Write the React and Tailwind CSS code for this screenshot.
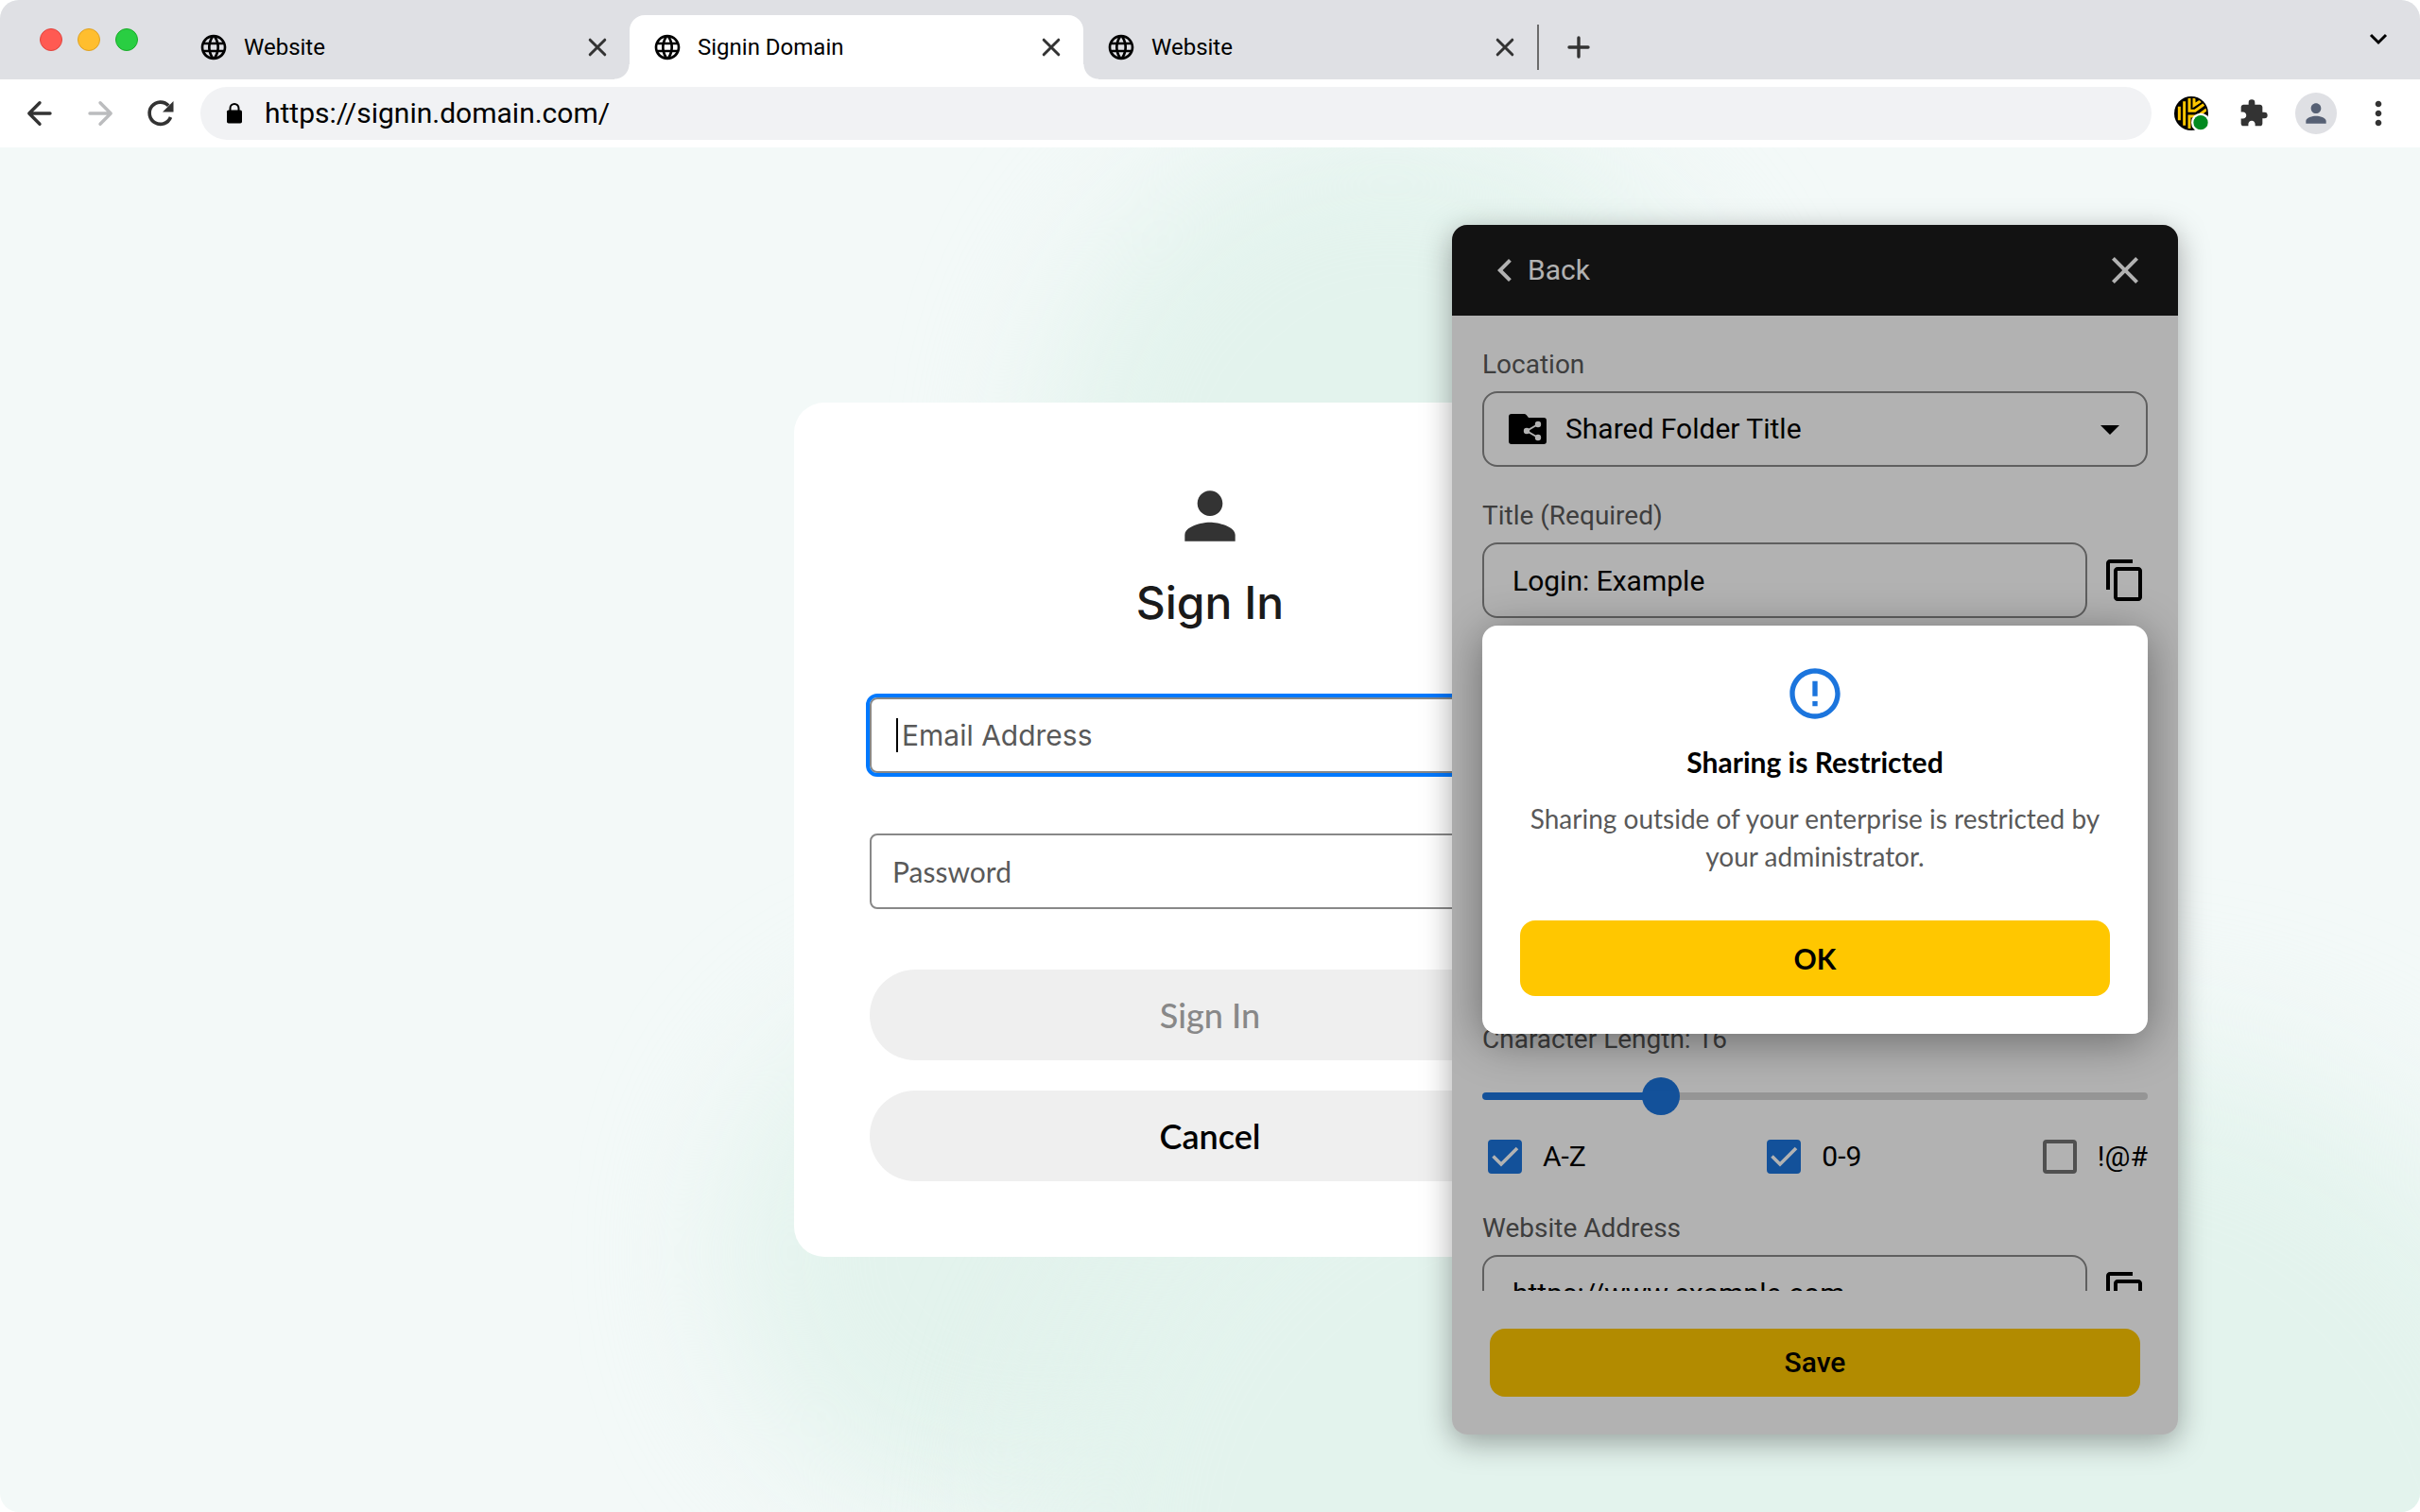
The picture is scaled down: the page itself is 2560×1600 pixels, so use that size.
import React from "react";
import {
  MdArrowDropDown,
  MdChevronLeft,
  MdClose,
  MdContentCopy,
  MdErrorOutline,
  MdExtension,
  MdLanguage,
  MdMoreVert,
  MdPerson,
} from "react-icons/md";

const CloseGlyph = () => (
  <svg viewBox="0 0 32 32" className="size-8" fill="none" stroke="#333333" strokeWidth="3" strokeLinecap="round">
    <path d="M8.2 8.2 23.8 23.8M23.8 8.2 8.2 23.8" />
  </svg>
);

const KeeperLogo = () => (
  <svg viewBox="0 0 108 108" className="size-9">
    <defs>
      <clipPath id="keeper-disc">
        <circle cx="54" cy="54" r="49" />
      </clipPath>
    </defs>
    <circle cx="54" cy="54" r="54" fill="#000000" />
    <g clipPath="url(#keeper-disc)" fill="none" stroke="#ffc700" strokeWidth="9">
      <path d="M16 32V76" />
      <path d="M32 16V92" />
      <path d="M48 6V46H66L96 24" />
      <path d="M63 6V28L84 14" />
      <path d="M48 102V63H74L104 40" />
      <path d="M63 100V78H82L104 62" />
    </g>
    <circle cx="84" cy="83" r="30" fill="#ffffff" />
    <circle cx="84" cy="83" r="23" fill="#008a20" />
  </svg>
);

const SharedFolder = () => (
  <svg viewBox="0 0 48 48" className="size-12 shrink-0">
    <path
      d="M7 8h13.2c1 0 1.8.4 2.4 1.1L25 12h16a3 3 0 0 1 3 3v22a3 3 0 0 1-3 3H7a3 3 0 0 1-3-3V11a3 3 0 0 1 3-3Z"
      fill="#000000"
    />
    <g stroke="#ffffff" strokeWidth="2" fill="#ffffff">
      <path d="M35 19 23 26 35 33" fill="none" />
      <circle cx="35" cy="19" r="2.2" />
      <circle cx="23" cy="26" r="2.2" />
      <circle cx="35" cy="33" r="2.2" />
    </g>
  </svg>
);

function Tab({ title, active = false }) {
  return (
    <div
      className={
        active
          ? "relative flex w-[480px] items-center gap-4 rounded-t-2xl bg-white pr-[18px] pl-6"
          : "flex w-[480px] items-center gap-4 pr-[18px] pl-6"
      }
    >
      {active && (
        <>
          <span className="absolute bottom-0 -left-4 size-4 bg-[radial-gradient(circle_at_top_left,transparent_15px,#ffffff_16px)]" />
          <span className="absolute -right-4 bottom-0 size-4 bg-[radial-gradient(circle_at_top_right,transparent_15px,#ffffff_16px)]" />
        </>
      )}
      <button type="button" className="flex flex-1 items-center gap-4 text-left text-2xl text-black">
        <MdLanguage className="size-8" />
        <span>{title}</span>
      </button>
      <button type="button" aria-label={`Close ${title}`}>
        <CloseGlyph />
      </button>
    </div>
  );
}

function TabBar() {
  return (
    <div className="flex h-21 bg-[#dfe0e4]">
      <div className="flex h-full w-[186px] items-center gap-4 pl-[42px]">
        <button type="button" aria-label="Close window" className="size-6 rounded-full border border-[#e0443e] bg-[#ff5a52]" />
        <button type="button" aria-label="Minimize window" className="size-6 rounded-full border border-[#dea123] bg-[#ffbe2e]" />
        <button type="button" aria-label="Zoom window" className="size-6 rounded-full border border-[#1aab29] bg-[#29ce42]" />
      </div>
      <div className="flex pt-4">
        <Tab title="Website" />
        <Tab title="Signin Domain" active />
        <Tab title="Website" />
      </div>
      <div className="flex flex-1 items-center gap-[26px] pt-4">
        <span className="h-12 w-0.5 bg-[#6b6b6b]" />
        <button type="button" aria-label="New tab">
          <svg viewBox="0 0 32 32" className="size-8" fill="none" stroke="#333333" strokeWidth="3.4" strokeLinecap="round">
            <path d="M16 6v20M6 16h20" />
          </svg>
        </button>
      </div>
      <button type="button" aria-label="Search tabs" className="mr-7 self-center">
        <svg viewBox="0 0 32 32" className="size-8" fill="none" stroke="#000000" strokeWidth="3">
          <path d="m8 11 8 8 8-8" />
        </svg>
      </button>
    </div>
  );
}

const barButton = "flex size-11 items-center justify-center";

function Toolbar() {
  return (
    <div className="flex h-18 items-center gap-5 bg-white pl-5">
      <button type="button" aria-label="Back" className={barButton}>
        <svg viewBox="0 0 44 44" className="size-11" fill="none" stroke="#333333" strokeWidth="3.4" strokeLinecap="round" strokeLinejoin="round">
          <path d="M33 22H11M22 10.800 10.800 22 22 33.200" />
        </svg>
      </button>
      <button type="button" aria-label="Forward" className={barButton}>
        <svg viewBox="0 0 44 44" className="size-11" fill="none" stroke="#bbbcbe" strokeWidth="3.4" strokeLinecap="round" strokeLinejoin="round">
          <path d="M11 22h22M22 10.800 33.200 22 22 33.200" />
        </svg>
      </button>
      <button type="button" aria-label="Reload" className={barButton}>
        <svg viewBox="0 0 44 44" className="size-11">
          <path d="M32.500 26A11.600 11.600 0 1 1 30.200 13.800" fill="none" stroke="#333333" strokeWidth="3.6" />
          <path d="M35.500 9v11.500H24Z" fill="#333333" />
        </svg>
      </button>
      <div className="flex h-14 flex-1 items-center gap-4 rounded-full bg-[#f1f2f4] pl-5">
        <svg viewBox="0 0 32 32" className="size-8">
          <path d="M11.500 14v-3.500a4.500 4.500 0 0 1 9 0V14" fill="none" stroke="#000000" strokeWidth="2" />
          <rect x="8" y="12.500" width="16" height="14" rx="1.800" fill="#000000" />
        </svg>
        <input
          aria-label="Address"
          defaultValue="https://signin.domain.com/"
          className="min-w-0 flex-1 bg-transparent text-3xl text-black outline-none"
        />
      </div>
      <div className="flex items-center gap-[22px] pr-[22px]">
        <button type="button" aria-label="Keeper" className={barButton}>
          <KeeperLogo />
        </button>
        <button type="button" aria-label="Extensions" className={barButton}>
          <MdExtension className="size-8 text-[#333333]" />
        </button>
        <button type="button" aria-label="Profile" className="flex size-11 items-center justify-center rounded-full bg-[#dfe0e4]">
          <MdPerson className="size-8 text-[#566074]" />
        </button>
        <button type="button" aria-label="Menu" className={barButton}>
          <MdMoreVert className="size-10 shrink-0 text-[#333333]" />
        </button>
      </div>
    </div>
  );
}

function SignInCard() {
  return (
    <form className="flex w-[880px] flex-col rounded-4xl bg-white p-20 font-['Lato',sans-serif]">
      <MdPerson className="size-20 self-center text-[#333333]" />
      <h1 className="mt-4 text-center font-['Inter',sans-serif] text-5xl leading-[72px] font-medium text-[#1a1a1a]">
        Sign In
      </h1>
      <div className="mt-16 flex h-20 items-center gap-1 rounded-lg border-2 border-[#888888] bg-white pl-[26px] outline-4 outline-[#0079ff]">
        <span className="h-9 w-0.5 bg-black" />
        <input
          type="email"
          aria-label="Email Address"
          placeholder="Email Address"
          className="min-w-0 flex-1 bg-transparent font-['Inter',sans-serif] text-3xl outline-none placeholder:text-[#595959]"
        />
      </div>
      <input
        type="password"
        aria-label="Password"
        placeholder="Password"
        className="mt-16 h-20 rounded-lg border-2 border-[#888888] px-[22px] text-3xl placeholder:text-[#595959]"
      />
      <button type="button" disabled className="mt-16 h-24 rounded-full bg-[#efefef] text-4xl font-medium text-[#888888]">
        Sign In
      </button>
      <button type="button" className="mt-8 h-24 rounded-full bg-[#efefef] text-4xl font-semibold text-black">
        Cancel
      </button>
    </form>
  );
}

function CopyField({ id, label, value }) {
  return (
    <div className="mt-8 flex flex-col gap-2">
      <label htmlFor={id} className="text-[28px] leading-10 text-[#595959]">
        {label}
      </label>
      <div className="flex items-center gap-4">
        <input
          id={id}
          defaultValue={value}
          className="h-20 min-w-0 flex-1 rounded-2xl border-2 border-[#898989] bg-white px-[30px] text-3xl text-black"
        />
        <button type="button" aria-label={`Copy ${label}`}>
          <MdContentCopy className="size-12" />
        </button>
      </div>
    </div>
  );
}

function CharOption({ label, checked = false }) {
  return (
    <label className="flex items-center gap-4 text-3xl leading-[48px] text-black">
      <span className="grid size-12 place-items-center">
        <input
          type="checkbox"
          defaultChecked={checked}
          className="peer col-start-1 row-start-1 size-9 appearance-none rounded border-4 border-[#737373] checked:border-[#1c75dd] checked:bg-[#1c75dd]"
        />
        <svg
          viewBox="0 0 36 36"
          className="pointer-events-none invisible col-start-1 row-start-1 size-9 peer-checked:visible"
          fill="none"
          stroke="#ffffff"
          strokeWidth="3.6"
        >
          <path d="m5.500 17.500 8.500 8.500L31 9" />
        </svg>
      </span>
      {label}
    </label>
  );
}

function RestrictedDialog() {
  return (
    <div className="absolute inset-0 flex items-center bg-black/30 px-8 font-['Lato',sans-serif]">
      <div
        role="alertdialog"
        aria-labelledby="restricted-title"
        className="flex flex-1 flex-col items-center rounded-2xl bg-white p-10 shadow-[0_8px_48px_rgba(0,0,0,0.4)]"
      >
        <MdErrorOutline className="size-16 text-[#1c75dd]" />
        <h2 id="restricted-title" className="mt-5 text-3xl leading-10 font-bold text-black">
          Sharing is Restricted
        </h2>
        <p className="mt-5 text-center text-[28px] leading-10 text-[#595959]">
          Sharing outside of your enterprise is restricted by your administrator.
        </p>
        <button type="button" className="mt-12 h-20 self-stretch rounded-2xl bg-[#ffc700] text-3xl font-bold text-black">
          OK
        </button>
      </div>
    </div>
  );
}

function VaultPanel() {
  return (
    <aside className="absolute inset-y-[82px] right-64 flex w-3xl flex-col overflow-hidden rounded-2xl bg-white shadow-[0_8px_32px_rgba(0,0,0,0.35)]">
      <header className="flex h-24 items-center justify-between bg-[#1a1a1a] px-8 text-white">
        <button type="button" className="flex items-center text-3xl">
          <MdChevronLeft className="size-12" />
          Back
        </button>
        <button type="button" aria-label="Close">
          <MdClose className="size-12" />
        </button>
      </header>
      <div className="min-h-0 flex-1 overflow-hidden px-8">
        <div className="mt-8 flex flex-col gap-2">
          <label htmlFor="location" className="text-[28px] leading-10 text-[#595959]">
            Location
          </label>
          <div className="flex h-20 items-center rounded-2xl border-2 border-[#898989] bg-white pr-[14px] pl-[22px]">
            <SharedFolder />
            <select id="location" className="ml-4 min-w-0 flex-1 appearance-none bg-transparent text-3xl text-black outline-none">
              <option>Shared Folder Title</option>
            </select>
            <MdArrowDropDown className="size-12" />
          </div>
        </div>
        <CopyField id="title" label="Title (Required)" value="Login: Example" />
        <div className="mt-[426px] flex flex-col gap-5">
          <label htmlFor="length" className="text-[28px] leading-10 text-[#595959]">
            Character Length: 16
          </label>
          <input
            id="length"
            type="range"
            min="0"
            max="63"
            defaultValue="16"
            className="h-10 w-full appearance-none bg-transparent [&::-webkit-slider-runnable-track]:h-2 [&::-webkit-slider-runnable-track]:rounded-full [&::-webkit-slider-runnable-track]:bg-[linear-gradient(to_right,#1c75dd_27%,#d6d6d6_27%)] [&::-webkit-slider-thumb]:-mt-4 [&::-webkit-slider-thumb]:size-10 [&::-webkit-slider-thumb]:appearance-none [&::-webkit-slider-thumb]:rounded-full [&::-webkit-slider-thumb]:bg-[#1c75dd]"
          />
          <div className="flex justify-between">
            <CharOption label="A-Z" checked />
            <CharOption label="0-9" checked />
            <CharOption label="!@#" />
          </div>
        </div>
        <CopyField id="website" label="Website Address" value="https://www.example.com" />
      </div>
      <footer className="flex p-10">
        <button type="button" className="h-18 flex-1 rounded-2xl bg-[#ffc700] text-3xl font-medium text-black">
          Save
        </button>
      </footer>
      <RestrictedDialog />
    </aside>
  );
}

export default function App() {
  return (
    <div className="bg-white font-['Roboto',sans-serif]">
      <div className="flex h-screen flex-col overflow-hidden rounded-[20px] bg-[#f3f9f8]">
        <TabBar />
        <Toolbar />
        <main className="relative flex min-h-0 flex-1 items-center justify-center overflow-hidden">
          <div className="absolute top-[-2%] left-[43%] h-[70%] w-[29%] rounded-full bg-[#e3f3ed] blur-[70px]" />
          <div className="absolute top-[62%] left-[30%] h-[38%] w-[39%] rounded-full bg-[#e3f3ed] blur-[70px]" />
          <div className="absolute top-[66%] left-[43%] h-[75%] w-[65%] rounded-full bg-[#e3f3ed] blur-[80px]" />
          <div className="relative">
            <SignInCard />
          </div>
          <VaultPanel />
        </main>
      </div>
    </div>
  );
}
